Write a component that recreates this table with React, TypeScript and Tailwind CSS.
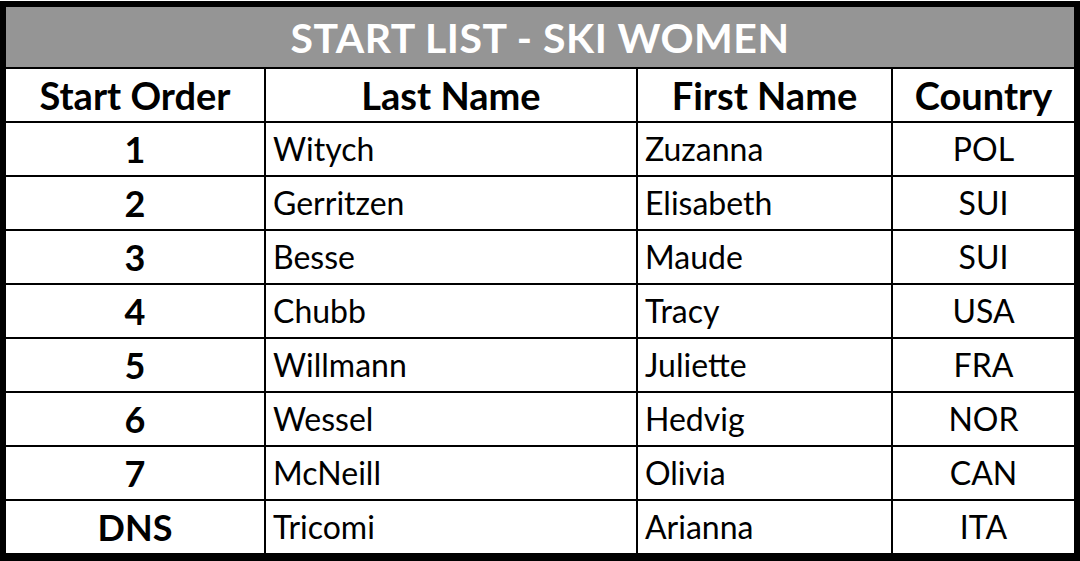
const rows = [
  { order: "1", last: "Witych", first: "Zuzanna", country: "POL" },
  { order: "2", last: "Gerritzen", first: "Elisabeth", country: "SUI" },
  { order: "3", last: "Besse", first: "Maude", country: "SUI" },
  { order: "4", last: "Chubb", first: "Tracy", country: "USA" },
  { order: "5", last: "Willmann", first: "Juliette", country: "FRA" },
  { order: "6", last: "Wessel", first: "Hedvig", country: "NOR" },
  { order: "7", last: "McNeill", first: "Olivia", country: "CAN" },
  { order: "DNS", last: "Tricomi", first: "Arianna", country: "ITA" },
];

export default function App() {
  return (
    <div className="w-[1080px] h-[561px] bg-white pt-px font-['Lato',sans-serif] text-black">
      <div className="border-x-[6px] border-t-[6px] border-b-[8px] border-black bg-black">
        {/* title bar */}
        <div className="h-[60px] bg-[#959595] flex items-center justify-center text-white font-bold text-[41px] leading-none tracking-[0.5px]">
          START LIST - SKI WOMEN
        </div>
        <div className="mt-[2px] grid grid-cols-[258px_370px_253px_1fr] gap-[2px] bg-black">
          <div className="h-[52px] bg-white flex items-center justify-center font-bold text-[38px]">Start Order</div>
          <div className="h-[52px] bg-white flex items-center justify-center font-bold text-[38px]">Last Name</div>
          <div className="h-[52px] bg-white flex items-center justify-center font-bold text-[38px]">First Name</div>
          <div className="h-[52px] bg-white flex items-center justify-center font-bold text-[38px]">Country</div>
          {rows.map((r) => (
            <>
              <div key={r.order + "o"} className="h-[52px] bg-white flex items-center justify-center font-bold text-[36px]">
                {r.order}
              </div>
              <div key={r.order + "l"} className="h-[52px] bg-white flex items-center pl-[7px] text-[32px]">
                {r.last}
              </div>
              <div key={r.order + "f"} className="h-[52px] bg-white flex items-center pl-[7px] text-[32px]">
                {r.first}
              </div>
              <div key={r.order + "c"} className="h-[52px] bg-white flex items-center justify-center text-[32px]">
                {r.country}
              </div>
            </>
          ))}
        </div>
      </div>
    </div>
  );
}
